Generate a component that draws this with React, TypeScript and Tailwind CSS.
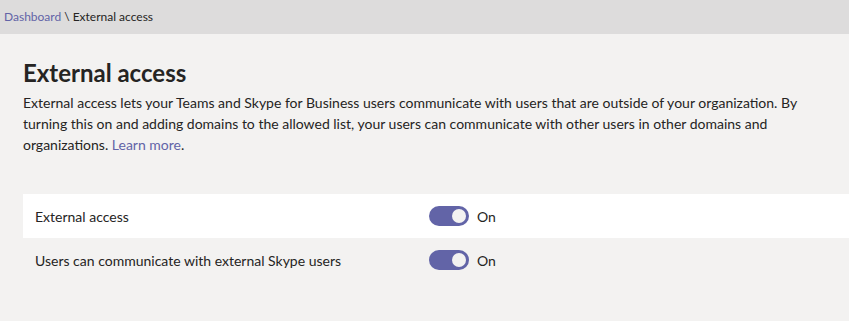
import React from 'react'

const font = { fontFamily: 'Lato, "Noto Sans", sans-serif' }

function Toggle({ on }: { on: boolean }) {
  return (
    <span className="flex items-center gap-2">
      <span
        className={`flex items-center w-[40px] h-[20px] rounded-full px-[3px] ${on ? 'bg-[#6264a7] justify-end' : 'bg-[#c8c6c4] justify-start'}`}
      >
        <span className="block w-[14px] h-[14px] rounded-full bg-[#f3f2f1]" />
      </span>
      <span className="text-[14px] text-[#252423]">{on ? 'On' : 'Off'}</span>
    </span>
  )
}

interface RowProps {
  label: string
  on: boolean
  white?: boolean
}

function SettingRow({ label, on, white }: RowProps) {
  return (
    <div className={`flex items-center h-[44px] pl-[12px] ${white ? 'bg-white' : ''}`}>
      <span className="w-[394px] text-[14px] text-[#252423]">{label}</span>
      <Toggle on={on} />
    </div>
  )
}

export default function App() {
  return (
    <div className="w-[849px] h-[321px] bg-[#f3f2f1] overflow-hidden" style={font}>
      {/* Breadcrumb bar */}
      <div className="h-[34px] bg-[#dddcdc] flex items-center px-[4px] text-[12px] text-[#252423]">
        <span className="text-[#6264a7]">Dashboard</span>
        <span className="ml-[3px]">\ External access</span>
      </div>

      <div className="pl-[23px]">
        <h1 className="mt-[23px] text-[24px] font-bold leading-[32px] text-[#252423]">External access</h1>
        <p className="mt-[3px] w-[800px] text-[14px] leading-[21px] text-[#252423]">
          External access lets your Teams and Skype for Business users communicate with users that are outside of
          your organization. By turning this on and adding domains to the allowed list, your users can communicate
          with other users in other domains and organizations.{' '}
          <span className="text-[#6264a7]">Learn more</span>.
        </p>

        <div className="mt-[39px]">
          <SettingRow label="External access" on white />
          <SettingRow label="Users can communicate with external Skype users" on />
        </div>
      </div>
    </div>
  )
}
